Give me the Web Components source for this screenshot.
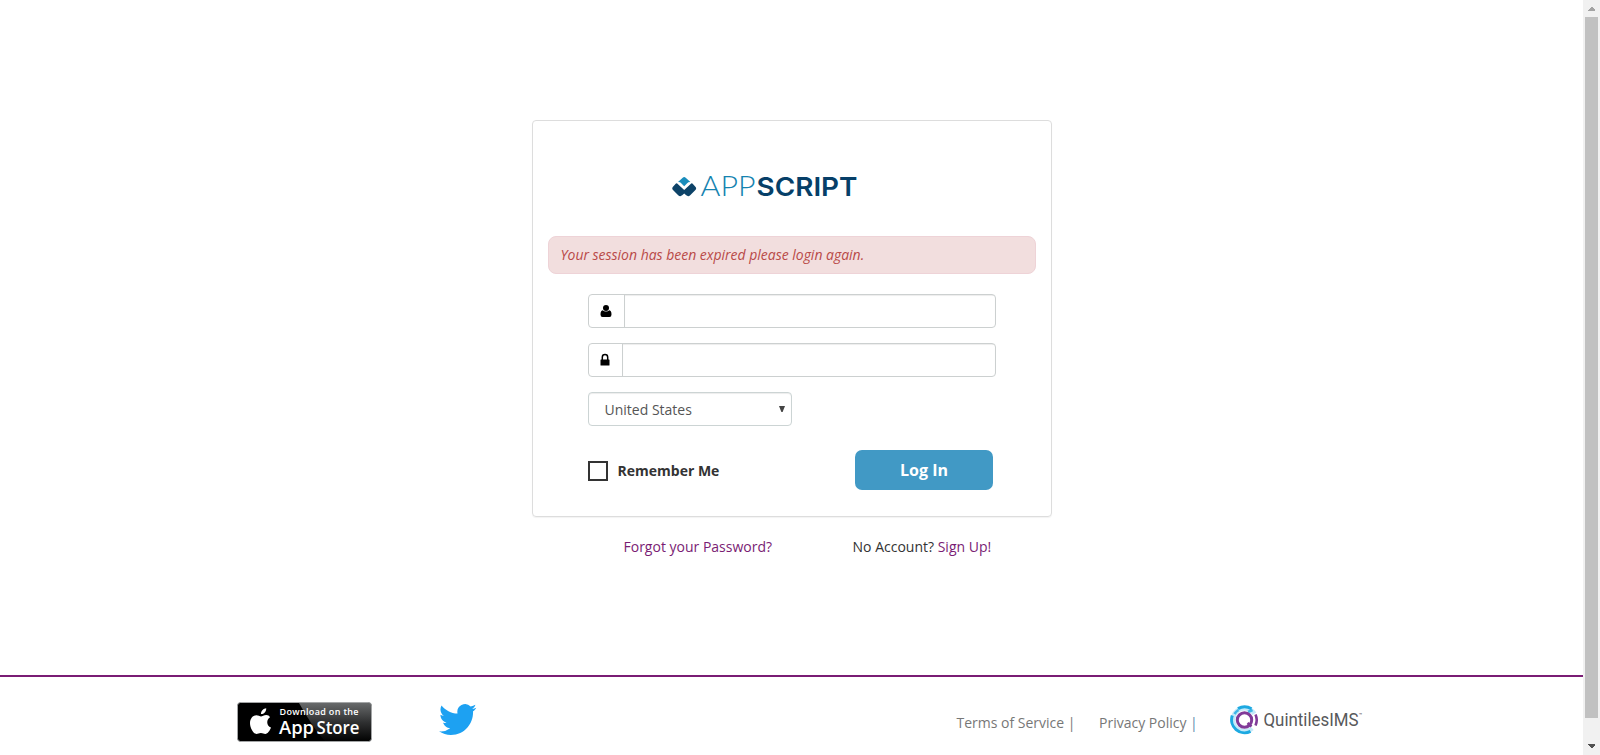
<!DOCTYPE html>
<html lang="en"><head><meta charset="utf-8"><title>AppScript</title>
<style>
body{margin:0;background:#fff;font:14px/20px "Open Sans",sans-serif;color:#333;height:755px;overflow:hidden}
</style></head><body>
<app-page></app-page>
<script>
function define(name, html){
  const t=document.createElement('template');t.innerHTML=html;
  customElements.define(name,class extends HTMLElement{
    constructor(){super();this.attachShadow({mode:'open'}).append(t.content.cloneNode(true));}
  });
}
define('app-logo',`<style>:host{display:block;width:188px;height:40px}svg{display:block}</style>
<svg width="188" height="40" viewBox="0 -7 188 40">
<path fill="#1a8dbc" d="M6 8L10.700 3.700Q12.200 2.300 13.700 3.700L18.400 8Q16 8 14.900 9.400L12.200 12.200L9.500 9.400Q8.400 8 6 8Z"/>
<path fill="#0d4368" d="M5.200 9.600L12.200 16.100L19.200 9.600Q20 9 20.700 9.800L23.600 13Q24.800 14.500 23.400 16L18.200 21.200Q16.200 23 14.200 21.300L12.200 19.500L10.200 21.300Q8.200 23 6.200 21.200L1 16Q-.400 14.500 .8 13L3.700 9.800Q4.400 9 5.200 9.600Z"/>
<text x="28.500" y="22" font-family="Lato" font-weight="300" font-size="26.500" textLength="55" lengthAdjust="spacingAndGlyphs" fill="#1583b0">APP</text>
<text x="84.500" y="22" font-family="Inter" font-weight="600" font-size="26.200" textLength="101" lengthAdjust="spacingAndGlyphs" fill="#063f68">SCRIPT</text></svg>`);
define('alert-box',`<style>:host{display:block;box-sizing:border-box;height:38px;border:1px solid #eed3d7;border-radius:8px;background:#f2dede;color:#b94a48;padding:8px 11.5px;font-style:italic;letter-spacing:-.02px}</style><slot></slot>`);
define('icon-field',`<style>:host{display:flex;box-sizing:border-box;height:34px;border:1px solid #ccd0d0;border-radius:4px;overflow:hidden}
.a{box-sizing:border-box;width:var(--addon,36px);border-right:1px solid #ccd0d0;display:flex;align-items:center;padding-left:11px}
.i{flex:1;box-shadow:inset 0 1px 1px rgba(0,0,0,.075)}</style><div class="a"><slot></slot></div><div class="i"></div>`);
define('user-icon',`<style>:host{display:block;width:12px;height:14px}svg{display:block}</style><svg width="12" height="14" viewBox="0 0 12 14"><circle cx="6" cy="4" r="3"/><path d="M2.600 6.200Q4.100 7.600 6 7.600T9.400 6.200Q11.500 6.700 11.500 10.500Q11.500 13 9.500 13H2.500Q.5 13 .5 10.500Q.5 6.700 2.600 6.200Z"/></svg>`);
define('lock-icon',`<style>:host{display:block;width:10px;height:14px}svg{display:block}</style><svg width="10" height="14" viewBox="0 0 10 14"><path fill="none" stroke="#000" stroke-width="1.500" d="M2.300 7V4.300a2.700 2.700 0 0 1 5.400 0V7"/><rect x=".5" y="6.500" width="9" height="6" rx=".6"/></svg>`);
define('country-select',`<style>:host{display:flex;align-items:center;justify-content:space-between;box-sizing:border-box;width:204px;height:34px;border:1px solid #ccd4d4;border-radius:4px;padding:2px 6px 0 15.5px;color:#555;box-shadow:inset 0 1px 1px rgba(0,0,0,.075)}svg{margin-top:-3px}</style><span><slot></slot></span><svg width="6" height="6"><path fill="#444" d="M0 0H6L3.600 6H2.400Z"/></svg>`);
define('check-box',`<style>:host{display:flex;align-items:center;gap:9.5px;font-weight:700;margin-top:2px}i{box-sizing:border-box;width:20px;height:20px;border:2px solid #333}</style><i></i><span><slot></slot></span>`);
define('login-button',`<style>:host{display:block;width:138px;height:40px;border-radius:7px;background:#4199c5;color:#fff;font-size:16px;font-weight:700;line-height:40px;text-align:center}</style><slot></slot>`);
define('login-card',`<style>:host{display:block;box-sizing:border-box;width:520px;height:397px;border:1px solid #ddd;border-radius:4px;padding:46px 15px 0;box-shadow:0 1px 1px rgba(0,0,0,.05)}
app-logo{margin:0 0 29px 124px}.f{display:grid;gap:15px;margin:20px 40px 0}.r{display:flex;justify-content:space-between;align-items:center;margin:24px 43px 0 40px}</style>
<app-logo></app-logo><alert-box>Your session has been expired please login again.</alert-box>
<div class="f"><icon-field style="--addon:36px"><user-icon></user-icon></icon-field><icon-field style="--addon:34px"><lock-icon></lock-icon></icon-field><country-select>United States</country-select></div>
<div class="r"><check-box>Remember Me</check-box><login-button>Log In</login-button></div>`);
define('account-links',`<style>:host{display:flex;gap:80.5px;padding:20px 0 0 91.5px;white-space:nowrap}a{color:#7a1c74}</style><a>Forgot your Password?</a><span>No Account? <a>Sign Up!</a></span>`);
define('store-badge',`<style>:host{display:block;width:135px;height:40px}svg{display:block}</style>
<svg width="135" height="40"><defs><linearGradient id="g" x2="0" y2="1"><stop stop-color="#686a6b"/><stop offset=".5" stop-color="#303132"/><stop offset="1" stop-color="#020202"/></linearGradient></defs>
<rect x=".5" y=".5" width="134" height="39" rx="3" fill="#000"/><path fill="url(#g)" d="M62 1H132Q134 1 134 3V39H88Q78 29 62 1Z"/><rect x=".5" y=".5" width="134" height="39" rx="3" fill="none" stroke="#a3a5a6"/>
<path fill="#fff" transform="translate(1 0)" d="M28.200 6.200C28.500 9.500 25.800 12.300 23 12.100C22.700 9.200 25.500 6.400 28.200 6.200ZM32 15.300C27.900 17.800 28.500 23.800 33 25.600C31.800 28.700 29.800 32 27.300 32C25.500 32 25 31 22.900 31C20.700 31 20 32 18.400 32C15.500 32 12 25.900 12 21.300C12 16.300 15.100 13.200 18.300 13.200C20.300 13.200 21.800 14.400 23 14.400C24.200 14.400 26 13 28.300 13C29.800 13 31.300 13.900 32 15.300Z"/>
<g fill="#fff" font-family="Open Sans"><text x="42.500" y="12.500" font-size="9" font-weight="600" textLength="79" lengthAdjust="spacing">Download on the</text><text x="42" y="31.500" font-size="18" font-weight="600" textLength="35" lengthAdjust="spacingAndGlyphs">App</text><text x="79.500" y="31.500" font-size="18" font-weight="600" textLength="43" lengthAdjust="spacingAndGlyphs">Store</text></g></svg>`);
define('twitter-icon',`<style>:host{display:block;width:38px;height:32px}svg{display:block}</style><svg width="38" height="32" viewBox="0 2 24 20" preserveAspectRatio="none"><path fill="#1da1f2" d="M23.600 4.900c-.8.400-1.700.6-2.600.8.900-.6 1.700-1.500 2-2.600-.9.500-1.900.9-3 1.100a4.900 4.900 0 0 0-8.300 4.400C7.600 8.400 4 6.500 1.600 3.500.3 5.700.9 8.600 3.100 10c-.8 0-1.500-.2-2.200-.6 0 2.300 1.600 4.400 3.900 4.900-.7.200-1.500.2-2.200.1.600 1.900 2.400 3.300 4.500 3.400A9.700 9.700 0 0 1 0 19.700 13.700 13.700 0 0 0 7.500 22C16.700 22 21.800 14.300 21.500 7.200c.8-.6 1.600-1.400 2.100-2.300z"/></svg>`);
define('quintiles-logo',`<style>:host{display:block;width:138px;height:36px}svg{display:block}</style><svg width="138" height="36" viewBox="0 -3 138 36" fill="none">
<circle cx="14.500" cy="14.800" r="11.500" stroke="#c3e9f9" stroke-width="4.500" stroke-dasharray="56 17" transform="rotate(48 14.500 14.800)"/>
<path stroke="#1da9e1" stroke-width="3" d="M8 3.600A13 13 0 0 1 21.500 3.800M2.300 10.500A13 13 0 0 0 20.500 26.300"/><path stroke="#1da9e1" stroke-width="2.500" d="M18 7L22.500 5M4.500 9A12 12 0 0 1 8.500 5" opacity=".8"/>
<circle cx="14.500" cy="15" r="7.200" stroke="#803a98" stroke-width="3" fill="#fff"/><path stroke="#803a98" stroke-width="2.600" d="M17.500 18L21.500 21.500M25.500 9.500Q28 15 25.500 20.500"/>
<text x="33.500" y="20.500" font-family="Roboto" font-size="18" textLength="95" lengthAdjust="spacingAndGlyphs" fill="#58595b">QuintilesIMS</text><text x="129" y="11.500" font-family="Roboto" font-size="5.500" fill="#58595b">™</text></svg>`);
define('page-footer',`<style>:host{display:flex;box-sizing:border-box;width:1583px;height:80px;border-top:2px solid #7a1c74;padding:25px 0 0 237px;color:#777;white-space:nowrap}
twitter-icon{margin:1px 0 0 67px}.t{margin:11px 0 0 479.5px}.p{margin:11px 0 0 23.5px}quintiles-logo{margin:0 0 0 32.5px}b{font-weight:400;color:#5b87ad}</style>
<store-badge></store-badge><twitter-icon></twitter-icon><span class="t">Terms of Service |</span><span class="p">Privacy Policy <b>|</b></span><quintiles-logo></quintiles-logo>`);
define('scroll-bar',`<style>:host{display:flex;flex-direction:column;align-items:center;width:17px;height:755px;background:#f1f1f1}i{width:13px;height:701px;background:#c1c1c1}svg{display:block;width:17px;height:17px}svg+i+svg{margin-top:15px}</style>
<svg shape-rendering="crispEdges"><path fill="#a3a3a3" d="M5 11V10L8 7H9L12 10V11Z"/></svg><i></i><svg shape-rendering="crispEdges"><path fill="#505050" d="M5 11V12L8 15H9L12 12V11Z"/></svg>`);
define('app-page',`<style>:host{display:flex;height:755px}main{display:flex;flex-direction:column;width:1583px;height:755px}section{box-sizing:border-box;height:675px;padding:120px 0 0 532px}</style>
<main><section><login-card></login-card><account-links></account-links></section><page-footer></page-footer></main><scroll-bar></scroll-bar>`);
</script></body></html>
